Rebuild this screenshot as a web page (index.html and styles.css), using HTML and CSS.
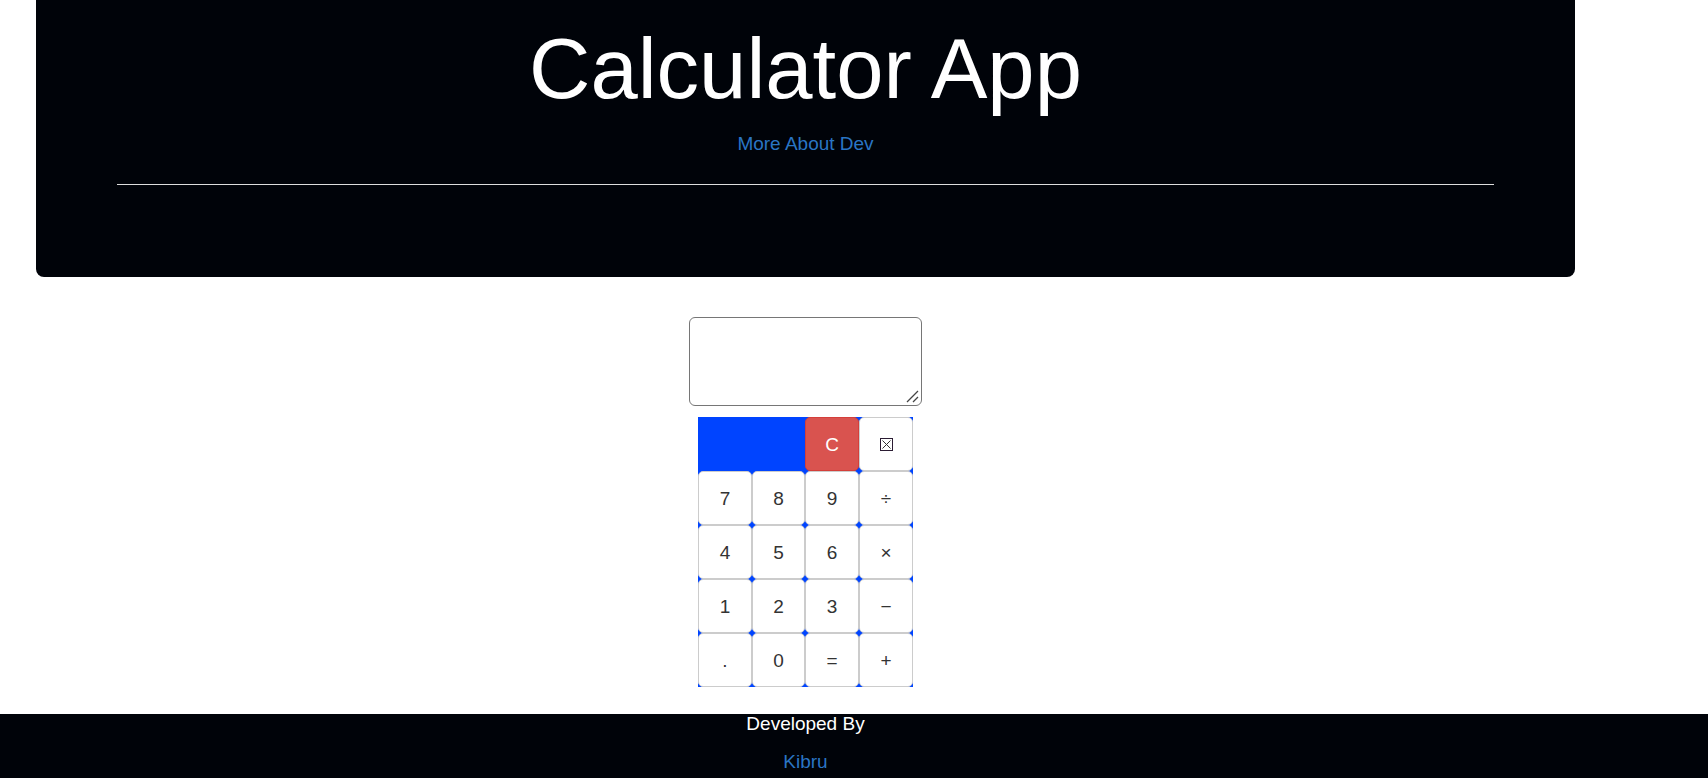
FILE: index.html
```
<!DOCTYPE html>
<html lang="en">
<head>
<meta charset="utf-8">
<title>Calculator App</title>
<link rel="stylesheet" href="styles.css">
</head>
<body>
<div class="content">
  <header class="banner">
    <h1 class="banner-title">Calculator App</h1>
    <a class="link" href="#about">More About Dev</a>
    <hr class="banner-rule">
  </header>
  <main class="calculator">
    <div class="display-wrap">
      <textarea class="display" aria-label="Calculator display"></textarea>
      <svg class="display-grip" viewBox="0 0 13 13" aria-hidden="true"><path d="M1 12L12 1M7 12l5-5"/></svg>
    </div>
    <div class="keypad">
      <button class="key key-clear" type="button">C</button>
      <button class="key" type="button" aria-label="Delete"><svg class="key-icon" viewBox="0 0 13 13" aria-hidden="true"><path class="icon-box" d="M.5.5h12v12H.5z"/><path class="icon-cross" d="M2.5 2.5l8 8M10.5 2.5l-8 8"/></svg></button>
      <button class="key" type="button">7</button>
      <button class="key" type="button">8</button>
      <button class="key" type="button">9</button>
      <button class="key" type="button">÷</button>
      <button class="key" type="button">4</button>
      <button class="key" type="button">5</button>
      <button class="key" type="button">6</button>
      <button class="key" type="button">×</button>
      <button class="key" type="button">1</button>
      <button class="key" type="button">2</button>
      <button class="key" type="button">3</button>
      <button class="key" type="button">−</button>
      <button class="key" type="button">.</button>
      <button class="key" type="button">0</button>
      <button class="key" type="button">=</button>
      <button class="key" type="button">+</button>
    </div>
  </main>
</div>
<footer class="footer">
  <p class="footer-line">Developed By</p>
  <a class="link" href="#kibru">Kibru</a>
</footer>
</body>
</html>
```
FILE: styles.css
```
* {
  box-sizing: border-box;
}

html {
  overflow: hidden;
}

body {
  margin: 0;
  min-height: 100vh;
  display: flex;
  flex-direction: column;
  background: #fff;
  color: #333;
  font-family: "Liberation Sans", Arial, sans-serif;
  font-size: 19px;
  line-height: 19px;
}

.content {
  margin-right: 97px;
  padding: 0 36px 27px;
}

.banner {
  padding: 22px 81px 92px;
  border-radius: 0 0 8px 8px;
  background: #000309;
  text-align: center;
}

.banner-title {
  margin: 0 0 19px;
  color: #fff;
  font-size: 85px;
  font-weight: 400;
  line-height: 93px;
}

.link {
  color: #2a75c4;
  text-decoration: none;
}

.banner-rule {
  height: 1px;
  margin: 31px 0 0;
  border: 0;
  background: #ddd;
}

.calculator {
  display: flex;
  flex-direction: column;
  align-items: center;
  gap: 11px;
  padding-top: 40px;
}

.display-wrap {
  position: relative;
}

.display {
  display: block;
  width: 233px;
  height: 89px;
  padding: 3px 8px;
  border: 1px solid #767676;
  border-radius: 6px;
  background: #fff;
  color: #333;
  font: inherit;
}

.display::-webkit-resizer {
  background: transparent;
}

.display-grip {
  position: absolute;
  right: 3px;
  bottom: 3px;
  width: 13px;
  height: 13px;
  fill: none;
  stroke: #444;
  stroke-width: 1.3;
  pointer-events: none;
}

.keypad {
  display: grid;
  grid-template-columns: 54px 53px 54px 54px;
  grid-auto-rows: 54px;
  background: #0044ff;
}

.key {
  display: flex;
  align-items: center;
  justify-content: center;
  padding: 0;
  border: 1px solid #ccc;
  border-radius: 5px;
  background: #fff;
  color: #333;
  font: inherit;
}

.key-clear {
  grid-column: 3;
  border-color: #d43f3a;
  background: #d9534f;
  color: #fff;
}

.key-icon {
  width: 13px;
  height: 13px;
  fill: none;
  stroke: #333;
}

.icon-box {
  stroke: #2b1c33;
  shape-rendering: crispEdges;
}

.footer {
  flex: 1;
  padding-right: 97px;
  background: #000309;
  text-align: center;
}

.footer-line {
  margin: 0 0 19px;
  color: #fff;
}
```
